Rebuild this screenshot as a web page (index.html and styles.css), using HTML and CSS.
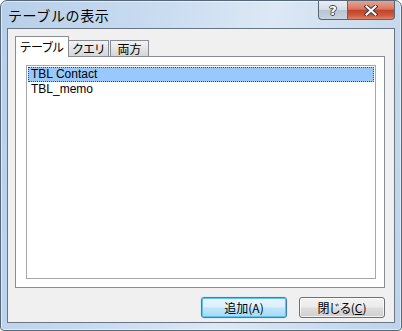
FILE: index.html
```html
<!DOCTYPE html>
<html lang="ja">
<head>
<meta charset="utf-8">
<title>テーブルの表示</title>
<link rel="stylesheet" href="styles.css">
</head>
<body>
<div class="window">
  <div class="titlebar">
    <span class="title">テーブルの表示</span>
    <div class="caption-btns">
      <div class="cap-btn help"><span class="help-glyph">?</span></div>
      <div class="cap-btn close">
        <svg width="14" height="11" viewBox="0 0 14 11">
          <path d="M2.5 1.5 L11.5 9.5 M11.5 1.5 L2.5 9.5" stroke="#3b3f48" stroke-width="4" stroke-linecap="square" fill="none"/>
          <path d="M2.5 1.5 L11.5 9.5 M11.5 1.5 L2.5 9.5" stroke="#ffffff" stroke-width="2" stroke-linecap="square" fill="none"/>
        </svg>
      </div>
    </div>
  </div>
  <div class="client">
    <div class="tabs">
      <div class="tab active">テーブル</div>
      <div class="tab t2">クエリ</div>
      <div class="tab t3">両方</div>
    </div>
    <div class="panel">
      <div class="listbox">
        <div class="item selected">TBL Contact</div>
        <div class="item">TBL_memo</div>
      </div>
    </div>
    <div class="buttons">
      <div class="btn default">追加(A)</div>
      <div class="btn">閉じる(<u>C</u>)</div>
    </div>
  </div>
</div>
</body>
</html>
```

FILE: styles.css
```css
* { box-sizing: border-box; }
html, body { margin: 0; padding: 0; background: #ffffff; }
body { font-family: "Liberation Sans", "Noto Sans CJK JP", sans-serif; font-size: 12px; color: #000; }

.window {
  width: 402px;
  height: 331px;
  border: 1px solid #56677a;
  border-radius: 7px 7px 4px 4px;
  background: linear-gradient(100deg, #b7cfe9 0%, #c9dcf0 35%, #dce8f5 60%, #c7daee 85%, #bdd3ea 100%);
  padding: 0 6px 7px 6px;
  display: flex;
  flex-direction: column;
  box-shadow: inset 0 0 0 1px rgba(255,255,255,0.55);
}

.titlebar {
  height: 27px;
  display: flex;
  justify-content: space-between;
  align-items: flex-start;
}
.title {
  font-family: "Noto Sans CJK JP", sans-serif;
  font-size: 14px;
  letter-spacing: 0.6px;
  line-height: 16px;
  margin-top: 6px;
  margin-left: 1px;
  color: #000;
}
.caption-btns { display: flex; }
.cap-btn {
  height: 19px;
  display: flex;
  align-items: center;
  justify-content: center;
  border: 1px solid #5c6673;
  border-top: none;
}
.help {
  width: 29px;
  border-right: none;
  border-radius: 0 0 0 4px;
  background: linear-gradient(#e9eef4 0%, #d3dce6 48%, #b9c5d2 52%, #c7d3df 100%);
}
.help-glyph {
  font-family: "DejaVu Sans", sans-serif;
  font-weight: bold;
  font-size: 13px;
  line-height: 13px;
  color: #fff;
  text-shadow: -1px 0 #3d4552, 1px 0 #3d4552, 0 -1px #3d4552, 0 1px #3d4552;
}
.close {
  width: 48px;
  border-radius: 0 0 4px 0;
  background: linear-gradient(#e7a393 0%, #d9775e 45%, #c4432a 52%, #cf5a3f 80%, #dd8369 100%);
}

.client {
  flex: 1;
  border: 1px solid #6b7684;
  background: #f0f0f0;
  padding: 7px 9px 0 7px;
  display: flex;
  flex-direction: column;
}

.tabs {
  display: flex;
  align-items: flex-end;
  height: 20px;
  position: relative;
  z-index: 1;
}
.tab {
  font-family: "Noto Sans CJK JP", sans-serif;
  font-feature-settings: "palt";
  font-size: 12px;
  line-height: 14px;
  border: 1px solid #898c95;
  border-bottom: none;
  display: flex;
  justify-content: center;
  align-items: center;
}
.tab.active {
  width: 54px;
  height: 21px;
  background: #ffffff;
  padding-bottom: 1px;
  margin-bottom: -1px;
}
.tab.t2 {
  width: 40px;
  height: 16px;
  border-left: none;
  background: linear-gradient(#f3f3f3, #e4e4e4 50%, #d6d6d6);
}
.tab.t3 {
  width: 39px;
  height: 16px;
  margin-left: 1px;
  background: linear-gradient(#f3f3f3, #e4e4e4 50%, #d6d6d6);
}

.panel {
  width: 370px;
  height: 232px;
  border: 1px solid #898c95;
  background: #ffffff;
  padding: 8px 8px 8px 10px;
}
.listbox {
  height: 100%;
  border: 1px solid #a7a7aa;
  background: #fff;
  padding: 1px 1px;
}
.item {
  height: 15px;
  line-height: 13px;
  padding-left: 2px;
  border: 1px solid transparent;
}
.item.selected {
  background: #99c8fa;
  border: 1px dotted #6a4410;
}

.buttons {
  display: flex;
  justify-content: flex-end;
  gap: 12px;
  margin-top: 9px;
  width: 370px;
}
.btn {
  width: 86px;
  height: 21px;
  border: 1px solid #707070;
  border-radius: 3px;
  background: linear-gradient(#f2f2f2 0%, #ebebeb 48%, #dddddd 52%, #cfcfcf 100%);
  box-shadow: inset 0 0 0 1px rgba(255,255,255,0.7);
  font-family: "Noto Sans CJK JP", sans-serif;
  font-feature-settings: "palt";
  font-size: 12px;
  line-height: 14px;
  display: flex;
  align-items: center;
  justify-content: center;
}
.btn.default {
  border-color: #3c7fb1;
  background: linear-gradient(#eaf6fd 0%, #d9f0fc 48%, #bee6fd 52%, #a7d9f5 100%);
  box-shadow: inset 0 0 0 1px #5fc4ef, 0 0 1px #5fc4ef;
}
.btn u { text-decoration: underline; }
```
